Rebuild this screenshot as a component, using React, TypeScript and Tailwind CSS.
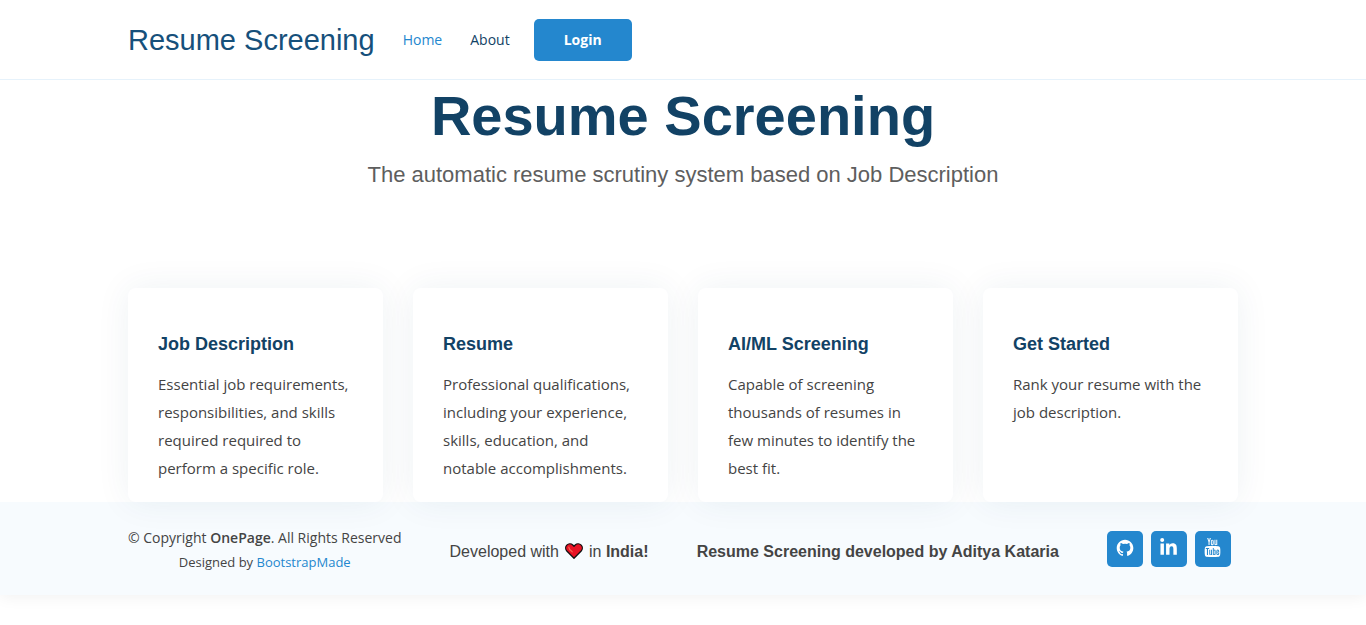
import { BiLogoGithub } from 'react-icons/bi';
import { FaLinkedinIn } from 'react-icons/fa';
import { TfiYoutube } from 'react-icons/tfi';

const cards = [
  {
    title: 'Job Description',
    text: 'Essential job requirements, responsibilities, and skills required required to perform a specific role.',
  },
  {
    title: 'Resume',
    text: 'Professional qualifications, including your experience, skills, education, and notable accomplishments.',
  },
  {
    title: 'AI/ML Screening',
    text: 'Capable of screening thousands of resumes in few minutes to identify the best fit.',
  },
  { title: 'Get Started', text: 'Rank your resume with the job description.' },
];

const socials = [
  { label: 'GitHub', icon: <BiLogoGithub className="size-5" /> },
  { label: 'LinkedIn', icon: <FaLinkedinIn className="size-[19px]" /> },
  { label: 'YouTube', icon: <TfiYoutube className="size-[19px]" /> },
];

function Heart() {
  return (
    <svg viewBox="0 0 18 16" className="mx-[6px] inline-block h-4 w-[18px] align-[-2px]" role="img" aria-label="love">
      <path
        d="M9 15.2 1.8 8C.3 6.4.3 3.7 1.8 2.1 3.5.4 6.2.4 7.8 2L9 3.2 10.2 2c1.6-1.6 4.3-1.6 6 .1 1.5 1.6 1.5 4.3 0 5.9Z"
        fill="#e81224"
        stroke="#111"
        strokeWidth="1.3"
        strokeLinejoin="round"
      />
      <path d="M3.8 4.2c.2 1.8 1.4 3.3 3.4 4.6" fill="none" stroke="#f4614f" strokeWidth="1.3" strokeLinecap="round" />
    </svg>
  );
}

export default function App() {
  return (
    <div className="bg-white pb-8 font-['Open_Sans',sans-serif] text-[#444444]">
      <header className="border-b border-[#e6f2fb]">
        <div className="mx-auto flex h-[79px] max-w-[1140px] items-center px-[15px]">
          <a href="#" className="font-['Liberation_Sans',sans-serif] text-[29px] leading-9 whitespace-nowrap text-[#16507b]">
            Resume Screening
          </a>
          <nav className="ml-7 flex items-center text-sm">
            <a href="#home" className="text-[#2487ce]">
              Home
            </a>
            <a href="#about" className="ml-7 text-[#124265]">
              About
            </a>
            <a href="#login" className="ml-6 rounded-[5px] bg-[#2487ce] px-[30px] py-[11px] font-bold text-white">
              Login
            </a>
          </nav>
        </div>
      </header>

      <main className="relative z-10 bg-white">
        <section className="px-[15px] pt-2 text-center font-['Liberation_Sans',sans-serif]">
          <h1 className="text-[56px] leading-[56px] font-bold text-[#124265]">Resume Screening</h1>
          <h2 className="mt-4 text-[22px] leading-[30px] text-[#5e5e5e]">
            The automatic resume scrutiny system based on Job Description
          </h2>
        </section>
        <section className="mx-auto mt-[98px] grid max-w-[1140px] grid-cols-4 gap-[30px] px-[15px]">
          {cards.map((card) => (
            <article
              key={card.title}
              className="rounded-lg bg-white px-[30px] pt-11 pb-5 shadow-[0_0_35px_rgba(18,66,101,0.07)]"
            >
              <h3 className="font-['Liberation_Sans',sans-serif] text-lg leading-6 font-bold text-[#124265]">
                {card.title}
              </h3>
              <p className="mt-[14px] text-[15px] leading-7">{card.text}</p>
            </article>
          ))}
        </section>
      </main>

      <footer className="bg-[#f7fbfe] shadow-[0_2px_15px_rgba(0,0,0,0.06)]">
        <div className="mx-auto flex max-w-[1140px] items-center justify-between pt-[22px] pr-[22px] pb-[21px] pl-[15px]">
          <div className="pt-[2px] text-center">
            <p className="text-sm leading-6">
              © Copyright <strong className="font-semibold">OnePage</strong>. All Rights Reserved
            </p>
            <p className="text-[13px] leading-6">
              Designed by{' '}
              <a href="#bootstrapmade" className="text-[#2487ce]">
                BootstrapMade
              </a>
            </p>
          </div>
          <p className="pt-[6px] font-['Liberation_Sans',sans-serif] text-base">
            Developed with
            <Heart />
            in <strong>India!</strong>
          </p>
          <p className="pt-[6px] font-['Liberation_Sans',sans-serif] text-base font-bold">
            Resume Screening developed by Aditya Kataria
          </p>
          <div className="flex gap-2">
            {socials.map((social) => (
              <a
                key={social.label}
                href="#"
                aria-label={social.label}
                className="flex size-9 items-center justify-center rounded-[5px] bg-[#2487ce] pb-[3px] text-white"
              >
                {social.icon}
              </a>
            ))}
          </div>
        </div>
      </footer>
    </div>
  );
}
